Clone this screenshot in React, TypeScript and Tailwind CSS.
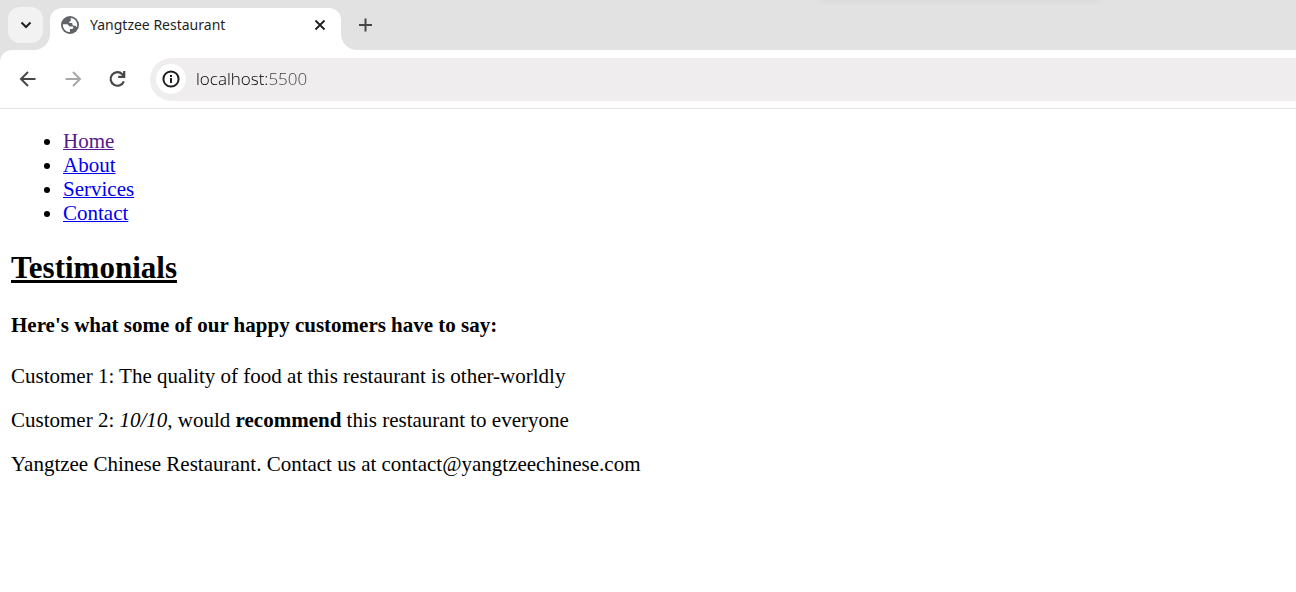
const ink = "text-[#1f1f1f]";

function Globe() {
  return (
    <svg className="size-5 shrink-0" viewBox="0 0 20 20" aria-hidden="true">
      <circle cx="10" cy="10" r="9" fill="#5f6368" />
      <path
        d="M10.500 3c3.800.1 6.700 3.200 6.700 7 0 .9-.1 1.500-.4 2.200l-1.200-1.400h-2.200l-1.200-1.600V8H9.400V6.200h1.400V4.600zM2.900 9.200h4.500l2.300 2.200h2.900c.9 0 .9.900.6 1.600-.3.800-.9 1-1.500 1H9.900v3.100C6.100 17.100 2.900 14 2.900 10z"
        fill="#fff"
      />
    </svg>
  );
}

function Flare({ side }: { side: "left" | "right" }) {
  return (
    <svg
      className={
        side === "left"
          ? "absolute right-full bottom-0 size-4 text-white"
          : "absolute bottom-0 left-full size-4 text-white"
      }
      viewBox="0 0 16 16"
      aria-hidden="true"
    >
      <path
        d={side === "left" ? "M16 0v16H0A16 16 0 0 0 16 0z" : "M0 0v16h16A16 16 0 0 1 0 0z"}
        fill="currentColor"
      />
    </svg>
  );
}

function TabStrip() {
  return (
    <div className="relative flex h-[50px] items-end overflow-hidden pl-2">
      <div className="absolute -top-4 left-[820px] h-4 w-[280px] shadow-[0_0_10px_rgba(0,0,0,0.06)]" />
      <button
        type="button"
        aria-label="Search tabs"
        className="mb-[7px] flex h-9 w-[35px] items-center justify-center rounded-xl bg-[#f2f2f2]"
      >
        <svg className={"size-4 " + ink} viewBox="0 0 16 16" fill="none" stroke="currentColor" strokeWidth="2">
          <path d="M3.500 5.500 8 10l4.500-4.500" />
        </svg>
      </button>
      <div className="relative ml-[7px] flex h-[42px] w-[291px] items-center rounded-t-xl bg-white pr-3 pb-2 pl-[10px]">
        <Flare side="left" />
        <Globe />
        <span className={"ml-[10px] flex-1 font-['Noto_Sans',sans-serif] text-sm " + ink}>Yangtzee Restaurant</span>
        <button type="button" aria-label="Close tab" className={"flex size-[18px] items-center justify-center " + ink}>
          <svg className="size-3" viewBox="0 0 12 12" fill="none" stroke="currentColor" strokeWidth="1.800">
            <path d="m1.500 1.500 9 9m0-9-9 9" />
          </svg>
        </button>
        <Flare side="right" />
      </div>
      <button type="button" aria-label="New tab" className="mb-[18px] ml-[17px] text-[#474747]">
        <svg className="size-[14px]" viewBox="0 0 14 14" fill="none" stroke="currentColor" strokeWidth="2">
          <path d="M7.500 .5v13M1 7h13" />
        </svg>
      </button>
    </div>
  );
}

function Toolbar() {
  return (
    <div className="flex h-[59px] items-center rounded-tl-xl border-b border-[#e2e2e2] bg-white pl-[18px]">
      <div className="flex w-[109px] items-center justify-between">
        <button type="button" aria-label="Back" className="text-[#474747]">
          <svg className="size-5" viewBox="0 0 20 20" fill="none" stroke="currentColor" strokeWidth="2">
            <path d="M17.500 10H4M10 3l-7 7 7 7" />
          </svg>
        </button>
        <button type="button" aria-label="Forward" className="text-[#a8a8a8]">
          <svg className="size-5" viewBox="0 0 20 20" fill="none" stroke="currentColor" strokeWidth="2">
            <path d="M2.500 10H16M10 3l7 7-7 7" />
          </svg>
        </button>
        <button type="button" aria-label="Reload" className="text-[#474747]">
          <svg className="size-5" viewBox="0 0 20 20" fill="none" stroke="currentColor" strokeWidth="2.200">
            <path d="M16.800 12.300A6.800 6.800 0 1 1 15.300 5.200l1.500 1.600M17.200 2v5.800h-6" />
          </svg>
        </button>
      </div>
      <div className="ml-[23px] flex h-[43px] flex-1 items-center rounded-l-full bg-[#efedee] pl-[6px]">
        <button
          type="button"
          aria-label="View site information"
          className={"flex size-[30px] items-center justify-center rounded-full bg-white " + ink}
        >
          <svg className="size-[18px]" viewBox="0 0 18 18" fill="none" stroke="currentColor" strokeWidth="2">
            <circle cx="9" cy="9" r="7.600" />
            <path d="M9 8v5M9 5v2" />
          </svg>
        </button>
        <input
          type="text"
          aria-label="Address"
          defaultValue="localhost:5500"
          className="ml-[10px] flex-1 bg-[linear-gradient(to_right,#000000_72px,#3c3c3c_72px)] bg-clip-text font-['Open_Sans',sans-serif] text-[17px] font-light text-transparent outline-none"
        />
      </div>
    </div>
  );
}

const links = [
  { label: "Home", color: "text-[#551a8b]" },
  { label: "About", color: "text-[#0000ee]" },
  { label: "Services", color: "text-[#0000ee]" },
  { label: "Contact", color: "text-[#0000ee]" },
];

export default function App() {
  return (
    <div className="min-h-screen bg-white">
      <header className="bg-[#e2e2e2]">
        <TabStrip />
        <Toolbar />
      </header>
      <div className="px-[11px] pt-5 font-['Liberation_Serif',serif] text-[21px] leading-6 text-black">
        <nav>
          <ul className="list-disc pl-[52px]">
            {links.map((link) => (
              <li key={link.label}>
                <a href="#" className={"underline decoration-1 " + link.color}>
                  {link.label}
                </a>
              </li>
            ))}
          </ul>
        </nav>
        <main>
          <h2 className="mt-[25px] text-[31px] leading-9 font-bold underline">Testimonials</h2>
          <h4 className="mt-[27px] font-bold">Here's what some of our happy customers have to say:</h4>
          <p className="mt-[27px]">Customer 1: The quality of food at this restaurant is other-worldly</p>
          <p className="mt-5">
            Customer 2: <em>10/10</em>, would <strong className="font-bold">recommend</strong> this restaurant to everyone
          </p>
        </main>
        <footer className="mt-5">Yangtzee Chinese Restaurant. Contact us at contact@yangtzeechinese.com</footer>
      </div>
    </div>
  );
}
